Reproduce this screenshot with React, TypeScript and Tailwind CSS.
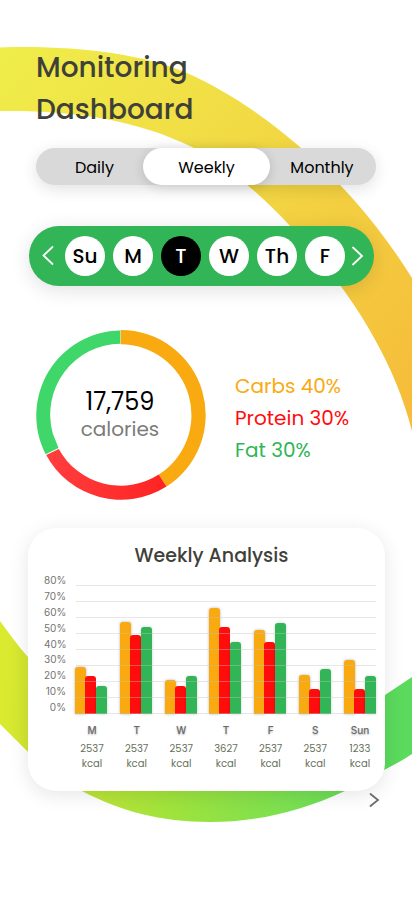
import { useState } from "react";

const periods = [
  { name: "Daily", box: "w-[107px] pl-2.5" },
  { name: "Weekly", box: "w-[127px]" },
  { name: "Monthly", box: "w-[106px] pr-0.5" },
];

const days = ["Su", "M", "T", "W", "Th", "F"];

const scale = ["80%", "70%", "60%", "50%", "40%", "30%", "20%", "10%", "0%"];

const week = [
  { day: "M", kcal: 2537, carbs: 47, protein: 38, fat: 28 },
  { day: "T", kcal: 2537, carbs: 92, protein: 79, fat: 87 },
  { day: "W", kcal: 2537, carbs: 34, protein: 28, fat: 38 },
  { day: "T", kcal: 3627, carbs: 106, protein: 87, fat: 72 },
  { day: "F", kcal: 2537, carbs: 84, protein: 72, fat: 91 },
  { day: "S", kcal: 2537, carbs: 39, protein: 25, fat: 45 },
  { day: "Sun", kcal: 1233, carbs: 54, protein: 25, fat: 38 },
];

function Backdrop() {
  return (
    <svg
      aria-hidden="true"
      className="pointer-events-none absolute inset-x-0 top-0 -z-10 h-[917px] w-full"
      viewBox="0 0 412 917"
      preserveAspectRatio="none"
    >
      <defs>
        <linearGradient id="sun" gradientUnits="userSpaceOnUse" x1="0" y1="60" x2="400" y2="420">
          <stop offset="0" stopColor="#EFED4A" />
          <stop offset="0.5" stopColor="#F2D743" />
          <stop offset="1" stopColor="#F6BC3A" />
        </linearGradient>
        <linearGradient id="leaf" gradientUnits="userSpaceOnUse" x1="0" y1="720" x2="385" y2="740">
          <stop offset="0" stopColor="#DAEA2F" />
          <stop offset="0.1" stopColor="#CFE532" />
          <stop offset="0.45" stopColor="#A0E33C" />
          <stop offset="0.75" stopColor="#7CE050" />
          <stop offset="1" stopColor="#5BDA5D" />
        </linearGradient>
      </defs>
      <path
        d="M0 47.5C70 45 140 53 187 73C225 90 263 115 300 147C345 185 382 230 412 278V431C393 355 345 283 290 226C262 195 228 167 192 147C135 119 70 110 0 111Z"
        fill="url(#sun)"
      />
      <path
        d="M0 621C9 633 18 646 28 657C90 720 160 750 220 750C290 748 345 722 385 695L412 677V754C403 760 394 765 384 770C371 777 358 785 345 791C300 812 255 822 210 822C160 822 120 811 82 791C62 780 43 767 28 752L0 724Z"
        fill="url(#leaf)"
      />
    </svg>
  );
}

function Donut() {
  return (
    <div className="relative size-[170px] shrink-0">
      <svg aria-hidden="true" className="size-full" viewBox="0 0 170 170">
        <defs>
          <linearGradient id="red" x1="0" y1="0" x2="1" y2="0">
            <stop offset="0" stopColor="#FF3E3E" />
            <stop offset="1" stopColor="#FF2323" />
          </linearGradient>
        </defs>
        <path d="M84.7 0A85 85 0 0 1 130.5 156.6L122.8 144.6A70.7 70.7 0 0 0 84.7 14.3Z" fill="#F9AA10" />
        <path d="M130.5 156.6A85 85 0 0 1 10.2 125L22.8 119A70.7 70.7 0 0 0 122.8 144.6Z" fill="url(#red)" />
        <path d="M9.6 124.2A85 85 0 0 1 84.3 0.5V13.8A70.7 70.7 0 0 0 16.8 103.5L22.5 118Z" fill="#3FD769" />
      </svg>
      <p className="absolute inset-0 flex flex-col items-center justify-center pt-0.5 pr-0.5">
        <span className="text-2xl leading-[26px] text-black">17,759</span>
        <span className="text-xl leading-7 text-[#7b7b78]">calories</span>
      </p>
    </div>
  );
}

function Chart() {
  return (
    <section className="rounded-[28px] bg-white pt-3.5 pr-[9px] pb-5 pl-4 shadow-[0_4px_20px_rgba(0,0,0,0.1)]">
      <h2 className="pl-[3px] text-center text-[19px] leading-7 font-medium text-[#3f4139]">Weekly Analysis</h2>
      <div className="mt-[3px] flex">
        <ul className="flex h-[142px] w-[22px] flex-col justify-between text-right font-['Inter',sans-serif] text-[10px] leading-[15px] text-[#737373]">
          {scale.map((s) => (
            <li key={s}>{s}</li>
          ))}
        </ul>
        <div className="relative mt-3 ml-[9px] h-[129px] flex-1">
          <div className="flex h-full items-end justify-between">
            {week.map((d, i) => (
              <div key={i} className="flex items-end">
                <div className="w-[11px] rounded-t-[3px] bg-[#f9aa10] shadow-[0_0_3px_rgba(0,0,0,0.3)]" style={{ height: d.carbs }} />
                <div className="-ml-px w-[11px] rounded-t-[3px] bg-[#ff0d0d]" style={{ height: d.protein }} />
                <div className="w-[11px] rounded-t-[3px] bg-[#31b557] shadow-[0_0_3px_rgba(0,0,0,0.2)]" style={{ height: d.fat }} />
              </div>
            ))}
          </div>
          <div aria-hidden="true" className="absolute inset-0 ml-px flex flex-col justify-between">
            {scale.map((s) => (
              <div key={s} className="h-px bg-[#c4c4c4]/40" />
            ))}
          </div>
        </div>
      </div>
      <ul className="mt-2 ml-8 flex justify-between text-center">
        {week.map((d, i) => (
          <li key={i} className="w-8 text-[10px] leading-[15px] text-[#66705a]">
            <p className="mb-[3px] font-['Inter',sans-serif] font-medium text-[#6b6b6b] [text-shadow:0_1px_2px_rgba(0,0,0,0.3)]">
              {d.day}
            </p>
            <p>{d.kcal}</p>
            <p>kcal</p>
          </li>
        ))}
      </ul>
    </section>
  );
}

export default function App() {
  const [period, setPeriod] = useState("Weekly");
  const [day, setDay] = useState(2);

  return (
    <main className="relative isolate min-h-screen overflow-hidden bg-white pt-[47px] pb-8 font-['Poppins','Inter',sans-serif]">
      <Backdrop />

      <h1 className="px-9 text-[28px] leading-[42px] font-medium text-[#3f4139]">
        Monitoring
        <br />
        Dashboard
      </h1>

      <div className="mx-9 mt-[17px] flex h-[37px] justify-between rounded-full bg-[#d9d9d9] shadow-[0_4px_16px_rgba(0,0,0,0.12)]">
        {periods.map((p) => (
          <button
            key={p.name}
            type="button"
            aria-pressed={period === p.name}
            onClick={() => setPeriod(p.name)}
            className={`${p.box} rounded-full pt-0.5 text-base text-black ${
              period === p.name ? "bg-white shadow-[0_2px_12px_rgba(0,0,0,0.15)]" : ""
            }`}
          >
            {p.name}
          </button>
        ))}
      </div>

      <div className="mt-[41px] mr-[38px] ml-[29px] flex h-[60px] items-center justify-between rounded-full bg-[#31b557] pr-2.5 pl-3 shadow-[0_4px_20px_rgba(0,0,0,0.12)]">
        <button type="button" aria-label="Previous days" className="text-white">
          <svg width="14" height="20" viewBox="0 0 14 20" fill="none" stroke="currentColor" strokeWidth="1.8" strokeLinecap="round">
            <path d="M11.5 1L2.5 9.5L11.5 18" />
          </svg>
        </button>
        <div className="flex gap-2 pl-[5px]">
          {days.map((d, i) => (
            <button
              key={d}
              type="button"
              aria-pressed={day === i}
              onClick={() => setDay(i)}
              className={`size-10 rounded-full text-xl font-medium ${day === i ? "bg-black text-white" : "bg-white text-black"}`}
            >
              {d}
            </button>
          ))}
        </div>
        <button type="button" aria-label="Next days" className="text-white">
          <svg width="14" height="20" viewBox="0 0 14 20" fill="none" stroke="currentColor" strokeWidth="1.8" strokeLinecap="round">
            <path d="M3 1.5L12 10L3 18.5" />
          </svg>
        </button>
      </div>

      <section className="mt-11 ml-9 flex items-center">
        <Donut />
        <ul className="mt-1.5 ml-[29px] text-xl leading-8">
          <li className="text-[#f9aa10]">Carbs 40%</li>
          <li className="text-[#ff0d0d]">Protein 30%</li>
          <li className="text-[#31b557]">Fat 30%</li>
        </ul>
      </section>

      <div className="mt-7 mr-[27px] ml-7">
        <Chart />
      </div>

      <div className="mt-0.5 mr-8 flex justify-end">
        <button type="button" aria-label="Next week" className="text-[#6b6b6b]">
          <svg width="12" height="14" viewBox="0 0 12 14" fill="none" stroke="currentColor" strokeWidth="1.8" strokeLinecap="round">
            <path d="M2.5 1L10 7L2.5 13" />
          </svg>
        </button>
      </div>
    </main>
  );
}
